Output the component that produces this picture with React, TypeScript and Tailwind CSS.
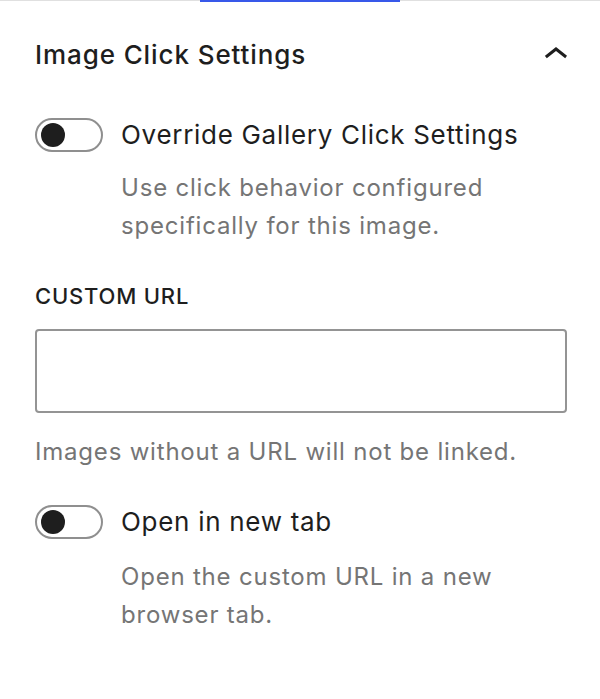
import { useState } from "react";

function Toggle({ on, onChange }: { on: boolean; onChange: () => void }) {
  return (
    <button
      type="button"
      onClick={onChange}
      className={`relative shrink-0 w-[68px] h-[34px] rounded-full border-2 ${on ? "border-[#3858e9] bg-[#3858e9]" : "border-[#8f8f8f] bg-white"}`}
    >
      <span
        className={`absolute top-1/2 -translate-y-1/2 w-[24px] h-[24px] rounded-full ${on ? "left-[36px] bg-white" : "left-[4px] bg-[#1e1e1e]"}`}
      />
    </button>
  );
}

function ToggleField({ label, help, helpClass }: { label: string; help: string; helpClass: string }) {
  const [on, setOn] = useState(false);
  return (
    <div>
      <div className="flex items-center gap-[18px]">
        <Toggle on={on} onChange={() => setOn(!on)} />
        <span className="text-[26px] leading-[36px] tracking-[0.7px] text-[#1e1e1e]">{label}</span>
      </div>
      <p className={`${helpClass} pl-[86px] pr-[60px] text-[24px] leading-[38px] tracking-[0.8px] text-[#757575]`}>{help}</p>
    </div>
  );
}

export default function App() {
  return (
    <div className="min-h-screen bg-white font-['Inter','Liberation_Sans',sans-serif]">
      {/* tab strip underline */}
      <div className="flex items-start">
        <div className="w-[200px] h-px bg-[#e0e0e0]" />
        <div className="w-[200px] h-[2px] bg-[#3858e9]" />
        <div className="flex-1 h-px bg-[#e0e0e0]" />
      </div>

      <div className="px-[35px] pr-[33px]">
        <div className="mt-[29px] flex items-center justify-between h-[48px]">
          <h2 className="text-[26px] leading-[36px] font-medium tracking-[0.9px] text-[#1e1e1e]">Image Click Settings</h2>
          <svg className="w-[48px] h-[48px] -mr-[13px]" viewBox="0 0 24 24" fill="#1e1e1e">
            <path d="M6.5 12.4L12 8l5.5 4.4-.9 1.2L12 10l-4.6 3.6-1-1.2z" />
          </svg>
        </div>

        <div className="mt-[38px]">
          <ToggleField
            label="Override Gallery Click Settings"
            help="Use click behavior configured specifically for this image."
            helpClass="mt-[16px]"
          />
        </div>

        <label className="block mt-[35px] text-[22px] leading-[32px] font-medium uppercase tracking-[0.8px] text-[#1e1e1e]">
          Custom URL
        </label>
        <input
          type="text"
          className="mt-[17px] block w-full h-[84px] rounded-[4px] border-2 border-[#949494] bg-white px-4 text-[26px] outline-none"
        />
        <p className="mt-[20px] text-[24px] leading-[38px] tracking-[0.8px] text-[#757575]">
          Images without a URL will not be linked.
        </p>

        <div className="mt-[33px]">
          <ToggleField
            label="Open in new tab"
            help="Open the custom URL in a new browser tab."
            helpClass="mt-[18px]"
          />
        </div>
      </div>
    </div>
  );
}
